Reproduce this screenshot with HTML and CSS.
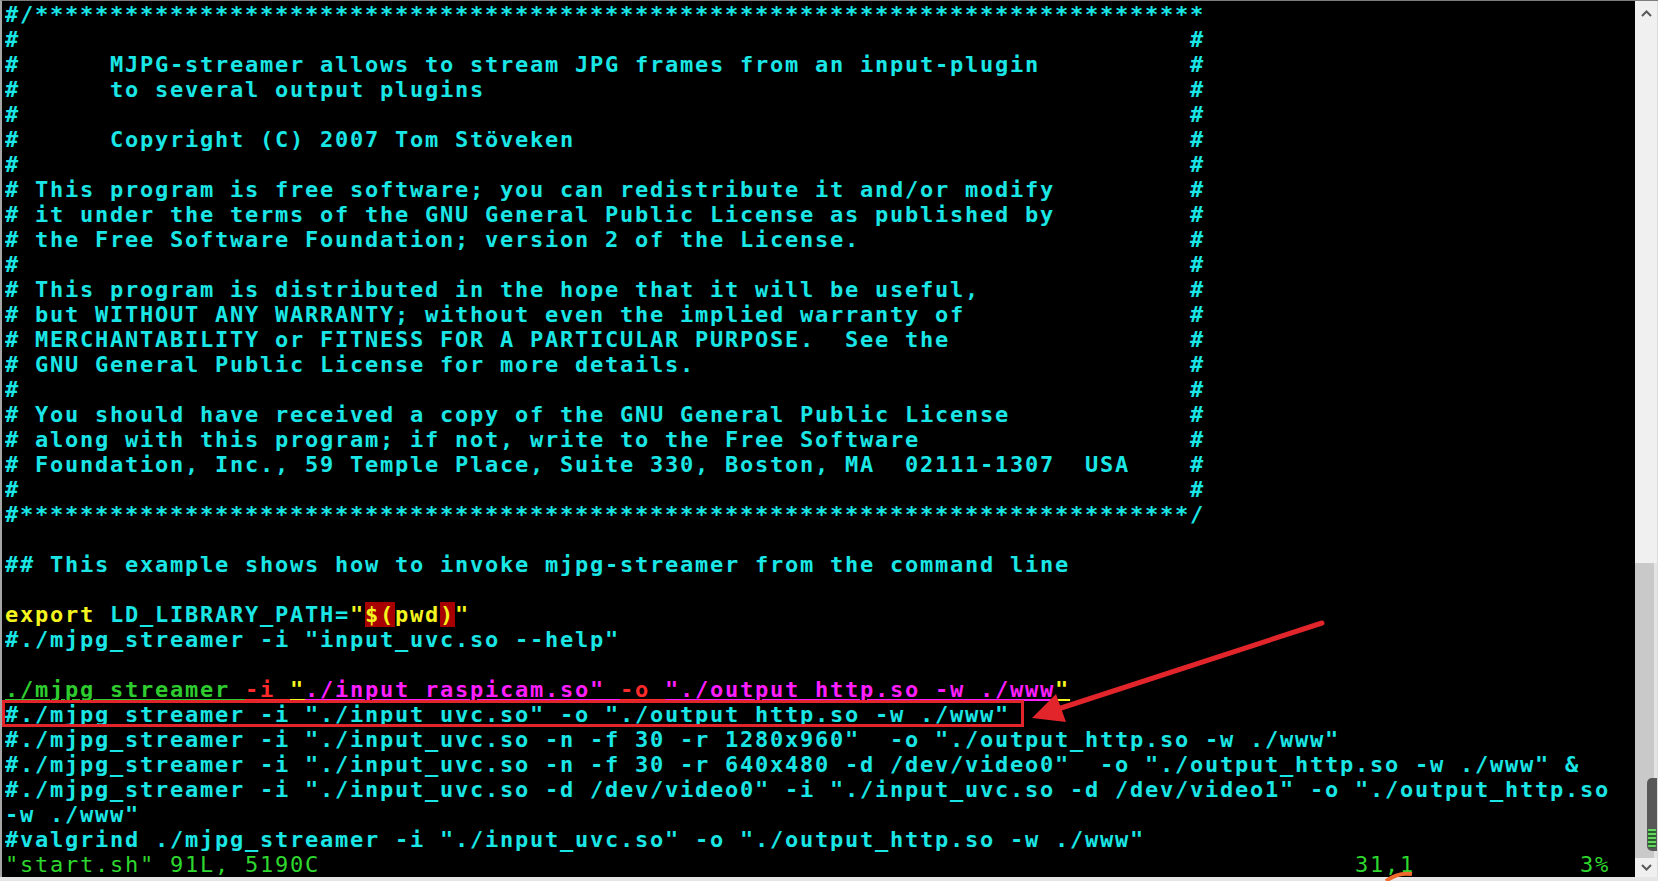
FILE: index.html
```html
<!DOCTYPE html>
<html lang="en">
<head>
    <meta charset="UTF-8">
    <meta name="viewport" content="width=device-width, initial-scale=1.0">
    <title>start.sh - vim</title>
    <link rel="stylesheet" href="styles.css">
</head>
<body>
    <div class="window">
        <div class="term">
            <div class="line">#/******************************************************************************</div>
            <div class="line"><span class="box">#</span>#</div>
            <div class="line"><span class="box">#      MJPG-streamer allows to stream JPG frames from an input-plugin</span>#</div>
            <div class="line"><span class="box">#      to several output plugins</span>#</div>
            <div class="line"><span class="box">#</span>#</div>
            <div class="line"><span class="box">#      Copyright (C) 2007 Tom Stöveken</span>#</div>
            <div class="line"><span class="box">#</span>#</div>
            <div class="line"><span class="box"># This program is free software; you can redistribute it and/or modify</span>#</div>
            <div class="line"><span class="box"># it under the terms of the GNU General Public License as published by</span>#</div>
            <div class="line"><span class="box"># the Free Software Foundation; version 2 of the License.</span>#</div>
            <div class="line"><span class="box">#</span>#</div>
            <div class="line"><span class="box"># This program is distributed in the hope that it will be useful,</span>#</div>
            <div class="line"><span class="box"># but WITHOUT ANY WARRANTY; without even the implied warranty of</span>#</div>
            <div class="line"><span class="box"># MERCHANTABILITY or FITNESS FOR A PARTICULAR PURPOSE.  See the</span>#</div>
            <div class="line"><span class="box"># GNU General Public License for more details.</span>#</div>
            <div class="line"><span class="box">#</span>#</div>
            <div class="line"><span class="box"># You should have received a copy of the GNU General Public License</span>#</div>
            <div class="line"><span class="box"># along with this program; if not, write to the Free Software</span>#</div>
            <div class="line"><span class="box"># Foundation, Inc., 59 Temple Place, Suite 330, Boston, MA  02111-1307  USA</span>#</div>
            <div class="line"><span class="box">#</span>#</div>
            <div class="line">#******************************************************************************/</div>
            <div class="line"></div>
            <div class="line">## This example shows how to invoke mjpg-streamer from the command line</div>
            <div class="line"></div>
            <div class="line"><span class="yellow">export</span> LD_LIBRARY_PATH=<span class="yellow">"</span><span class="yellow paren">$(</span><span class="yellow">pwd</span><span class="yellow paren">)</span><span class="yellow">"</span></div>
            <div class="line">#./mjpg_streamer -i "input_uvc.so --help"</div>
            <div class="line"></div>
            <div class="line cursorline"><span class="green">./mjpg_streamer </span><span class="red">-i </span><span class="yellow">"</span><span class="magenta">./input_raspicam.so" </span><span class="red">-o </span><span class="magenta">"./output_http.so -w ./www</span><span class="yellow">"</span></div>
            <div class="line">#./mjpg_streamer -i "./input_uvc.so" -o "./output_http.so -w ./www"</div>
            <div class="line">#./mjpg_streamer -i "./input_uvc.so -n -f 30 -r 1280x960"  -o "./output_http.so -w ./www"</div>
            <div class="line">#./mjpg_streamer -i "./input_uvc.so -n -f 30 -r 640x480 -d /dev/video0"  -o "./output_http.so -w ./www" &amp;</div>
            <div class="line">#./mjpg_streamer -i "./input_uvc.so -d /dev/video0" -i "./input_uvc.so -d /dev/video1" -o "./output_http.so</div>
            <div class="line">-w ./www"</div>
            <div class="line">#valgrind ./mjpg_streamer -i "./input_uvc.so" -o "./output_http.so -w ./www"</div>
            <div class="line status"><span class="msg">"start.sh" 91L, 5190C</span><span class="pos">31,1</span><span>3%</span></div>
        </div>
        <div class="scrollbar">
            <div class="sb-button">
                <svg width="11" height="7" viewBox="0 0 11 7"><polyline points="1,6 5.5,1.5 10,6" fill="none" stroke="#5a5a5a" stroke-width="2"/></svg>
            </div>
            <div class="sb-space"></div>
            <div class="sb-track">
                <div class="sb-thumb"><div class="sb-grip"></div></div>
            </div>
            <div class="sb-button sb-down">
                <svg width="11" height="7" viewBox="0 0 11 7"><polyline points="1,1 5.5,5.5 10,1" fill="none" stroke="#5a5a5a" stroke-width="2"/></svg>
            </div>
        </div>
    </div>

    <!-- red markup drawn over the screenshot -->
    <svg class="annotation" width="1658" height="881" viewBox="0 0 1658 881">
        <rect x="3.5" y="701.5" width="1019" height="24" fill="none" stroke="#e2252b" stroke-width="3"/>
        <line x1="1322" y1="623" x2="1058" y2="709" stroke="#e2252b" stroke-width="5" stroke-linecap="round"/>
        <polygon points="1032,718 1056,694 1066,722" fill="#e2252b"/>
        <path d="M1386 881 Q1398 872 1412 874" fill="none" stroke="#f0692c" stroke-width="4"/>
    </svg>
</body>
</html>
```

FILE: styles.css
```css
body {
    margin: 0;
    height: 881px;
    overflow: hidden;
    position: relative;
    background-color: #e6e6e6;
    font-family: "DejaVu Sans Mono", "Liberation Mono", monospace;
}

.window {
    display: flex;
    height: 877px;
    box-sizing: border-box;
    border-top: 1px solid #7c7c7c;
    border-left: 2px solid #a6a6a6;
}

.term {
    flex: 1;
    background-color: #000;
    color: #1ae6e6;
    padding-left: 3px;
    padding-top: 1px;
    font-size: 22px;
    font-weight: 700;
    letter-spacing: 1.755px;
}

.line {
    height: 25px;
    line-height: 25px;
    white-space: pre;
    overflow: hidden;
}

.box {
    display: inline-block;
    width: 1185px;
}

.yellow {
    color: #f4f41e;
}

.paren {
    background-color: #a80000;
}

.green {
    color: #2fcc2f;
}

.red {
    color: #ff2a2a;
}

.magenta {
    color: #ff1eff;
}

.cursorline span {
    text-decoration: underline;
    text-decoration-thickness: 2px;
    text-underline-offset: 2px;
}

.status {
    color: #2ed82e;
    font-weight: 400;
}

.status .msg {
    display: inline-block;
    width: 1350px;
}

.status .pos {
    display: inline-block;
    width: 225px;
}

.scrollbar {
    width: 23px;
    display: flex;
    flex-direction: column;
    background-color: #f0f0f0;
    border-right: 1px solid #dcdcdc;
    box-sizing: border-box;
}

.sb-button {
    height: 24px;
    display: flex;
    justify-content: center;
    align-items: center;
}

.sb-down {
    height: 19px;
}

.sb-space {
    flex: 1;
}

.sb-track {
    height: 295px;
    box-sizing: border-box;
    padding-bottom: 7px;
    display: flex;
    flex-direction: column;
    justify-content: flex-end;
    align-items: flex-end;
    background: linear-gradient(to right, #c9c9c9 19px, #e4e4e4 19px);
}

.sb-thumb {
    width: 10px;
    height: 73px;
    box-sizing: border-box;
    padding: 0 1px 3px 1px;
    display: flex;
    flex-direction: column;
    justify-content: flex-end;
    background-color: #585858;
    border-radius: 5px 0 0 5px;
}

.sb-grip {
    height: 19px;
    border-radius: 0 0 3px 3px;
    background: repeating-linear-gradient(#62d862 0 2px, #2c5c2c 2px 4px);
}

.annotation {
    position: absolute;
    left: 0;
    top: 0;
    pointer-events: none;
}
```
